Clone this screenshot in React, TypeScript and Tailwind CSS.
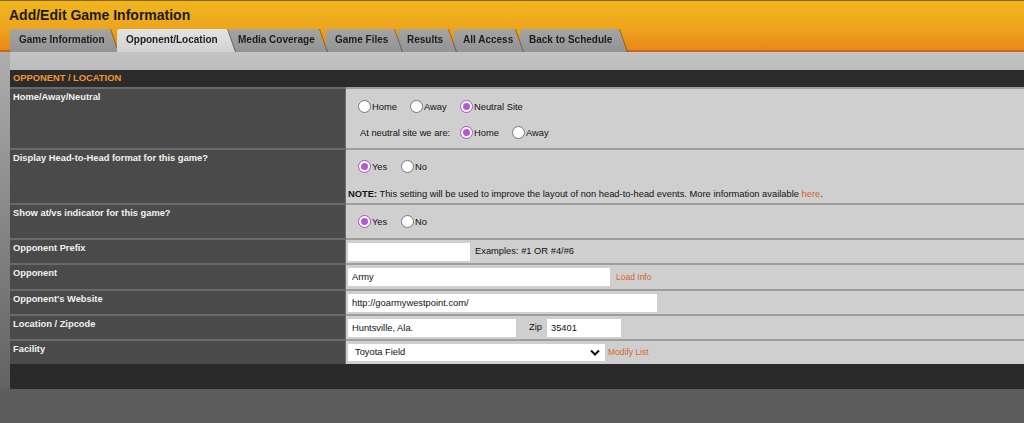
import React from 'react';

const tabs = [
  { label: 'Game Information', cls: 'w-[108px] -mr-[1px] z-[7]', active: false },
  { label: 'Opponent/Location', cls: 'w-[118px] -mr-[6px] z-[8]', active: true },
  { label: 'Media Coverage', cls: 'w-[98px] -mr-[1px] z-[5]', active: false },
  { label: 'Game Files', cls: 'w-[76px] -mr-[4px] z-[4]', active: false },
  { label: 'Results', cls: 'w-[58px] -mr-[2px] z-[3]', active: false },
  { label: 'All Access', cls: 'w-[69px] -mr-[3px] z-[2]', active: false },
  { label: 'Back to Schedule', cls: 'w-[107px] z-[1]', active: false },
];

const Radio: React.FC<{ checked?: boolean }> = ({ checked }) => (
  <span
    className={
      checked
        ? 'flex h-[13px] w-[13px] shrink-0 items-center justify-center rounded-full border-[1.5px] border-[#a44ec8] bg-white'
        : 'flex h-[13px] w-[13px] shrink-0 items-center justify-center rounded-full border border-[#767676] bg-white'
    }
  >
    {checked && <span className="h-[7px] w-[7px] rounded-full bg-[#b25ad6]" />}
  </span>
);

const Option: React.FC<{ label: string; checked?: boolean; className?: string }> = ({ label, checked, className }) => (
  <label className={`flex items-center ${className ?? ''}`}>
    <Radio checked={checked} />
    <span className="ml-[1px] pt-[2px]">{label}</span>
  </label>
);

const Row: React.FC<{ label: string; height: string; valueClass?: string; children: React.ReactNode }> = ({
  label,
  height,
  valueClass,
  children,
}) => (
  <div className={`flex ${height}`}>
    <div className="w-[336px] shrink-0 border-t-2 border-r border-t-[#696969] border-r-[#6e6e6e] bg-[#4a4a4a] pl-[3px] pt-[2px] text-[9.33px] font-bold leading-[12px] text-[#f3f3f3]">
      {label}
    </div>
    <div className={`flex-1 border-t-2 border-t-[#9d9d9d] bg-[#cfcfcf] text-[9.33px] text-[#111] ${valueClass ?? ''}`}>
      {children}
    </div>
  </div>
);

const TextBox: React.FC<{ value?: string; className: string }> = ({ value, className }) => (
  <input
    readOnly
    value={value ?? ''}
    className={`h-[18px] bg-white pl-[4px] text-[9.33px] text-[#111] outline-none ${className}`}
  />
);

const Link: React.FC<{ children: React.ReactNode; className?: string }> = ({ children, className }) => (
  <a className={`cursor-pointer text-[#d8642b] ${className ?? ''}`}>{children}</a>
);

export default function App() {
  return (
    <div className="h-[423px] w-full overflow-hidden bg-[#5d5d5d] font-['Liberation_Sans',Arial,sans-serif]">
      {/* header */}
      <div className="flex h-[52px] flex-col bg-gradient-to-b from-[#f0b71e] via-[#eda61e] to-[#e8841b] shadow-[inset_0_1px_0_#8a6512,inset_0_-2px_0_#c8661a]">
        <h1 className="pl-[9px] pt-[7px] text-[14px] font-bold leading-[16px] text-[#1b1b1b]">
          Add/Edit Game Information
        </h1>
        <div className="mt-[6px] flex h-[23px] pl-[10px]">
          {tabs.map((t) => (
            <div key={t.label} className={`relative drop-shadow-[1px_0_0_rgba(0,0,0,0.35)] ${t.cls}`}>
              <div
                className={`h-[23px] cursor-pointer whitespace-nowrap pl-[9px] text-[10px] font-bold leading-[21px] text-[#1d1d1d] [clip-path:polygon(0_2px,2px_0,calc(100%_-_8px)_0,100%_100%,0_100%)] bg-gradient-to-b ${
                  t.active ? 'from-[#e3e3e3] to-[#d2d2d2]' : 'from-[#a4a4a4] to-[#939393]'
                }`}
              >
                {t.label}
              </div>
            </div>
          ))}
        </div>
      </div>

      {/* body */}
      <div className="h-[337px] bg-gradient-to-b from-[#aeaeae] to-[#626262] pl-[10px]">
        <div className="h-[18px] bg-gradient-to-b from-[#c4c4c4] to-[#bbbbbb]" />
        <div className="h-[17px] bg-[#2b2b2b] pl-[3px] text-[9.33px] font-bold leading-[17px] text-[#f3982e]">
          OPPONENT / LOCATION
        </div>

        <Row label="Home/Away/Neutral" height="h-[61px]" valueClass="pt-[9px]">
          <div className="flex h-[18px] items-center pl-[12px]">
            <Option label="Home" className="w-[52px]" />
            <Option label="Away" className="w-[50px]" />
            <Option label="Neutral Site" checked />
          </div>
          <div className="mt-[8px] flex h-[18px] items-center pl-[14px]">
            <span className="w-[100px] pt-[1px]">At neutral site we are:</span>
            <Option label="Home" checked className="w-[52px]" />
            <Option label="Away" />
          </div>
        </Row>

        <Row label="Display Head-to-Head format for this game?" height="h-[55px]" valueClass="pt-[8px]">
          <div className="flex h-[18px] items-center pl-[12px]">
            <Option label="Yes" checked className="w-[43px]" />
            <Option label="No" />
          </div>
          <div className="mt-[12px] flex h-[14px] items-center pl-[2px]">
            <span>
              <b>NOTE:</b> This setting will be used to improve the layout of non head-to-head events. More information
              available <Link>here</Link>.
            </span>
          </div>
        </Row>

        <Row label="Show at/vs indicator for this game?" height="h-[35px]" valueClass="pt-[8px]">
          <div className="flex h-[18px] items-center pl-[12px]">
            <Option label="Yes" checked className="w-[43px]" />
            <Option label="No" />
          </div>
        </Row>

        <Row label="Opponent Prefix" height="h-[25px]" valueClass="flex items-center pl-[2px]">
          <TextBox className="w-[122px]" />
          <span className="ml-[5px]">Examples: #1 OR #4/#6</span>
        </Row>

        <Row label="Opponent" height="h-[26px]" valueClass="flex items-center pl-[2px]">
          <TextBox value="Army" className="w-[262px]" />
          <Link className="ml-[6px] text-[8.5px]">Load Info</Link>
        </Row>

        <Row label="Opponent's Website" height="h-[25px]" valueClass="flex items-center pl-[2px]">
          <TextBox value="http://goarmywestpoint.com/" className="w-[309px]" />
        </Row>

        <Row label="Location / Zipcode" height="h-[25px]" valueClass="flex items-center pl-[2px]">
          <TextBox value="Huntsville, Ala." className="w-[168px]" />
          <span className="ml-[13px]">Zip</span>
          <TextBox value="35401" className="ml-[5px] w-[74px]" />
        </Row>

        <Row label="Facility" height="h-[25px]" valueClass="flex items-center pl-[2px]">
          <div className="flex h-[17px] w-[257px] items-center justify-between bg-white pl-[7px] pr-[5px]">
            <span>Toyota Field</span>
            <svg width="10" height="7" viewBox="0 0 10 7" fill="none">
              <path d="M1 1.5 L5 5.5 L9 1.5" stroke="#111" strokeWidth="2" />
            </svg>
          </div>
          <Link className="ml-[3px] text-[8.5px]">Modify List</Link>
        </Row>

        <div className="h-[25px] bg-[#2a2a2a]" />
      </div>
    </div>
  );
}
